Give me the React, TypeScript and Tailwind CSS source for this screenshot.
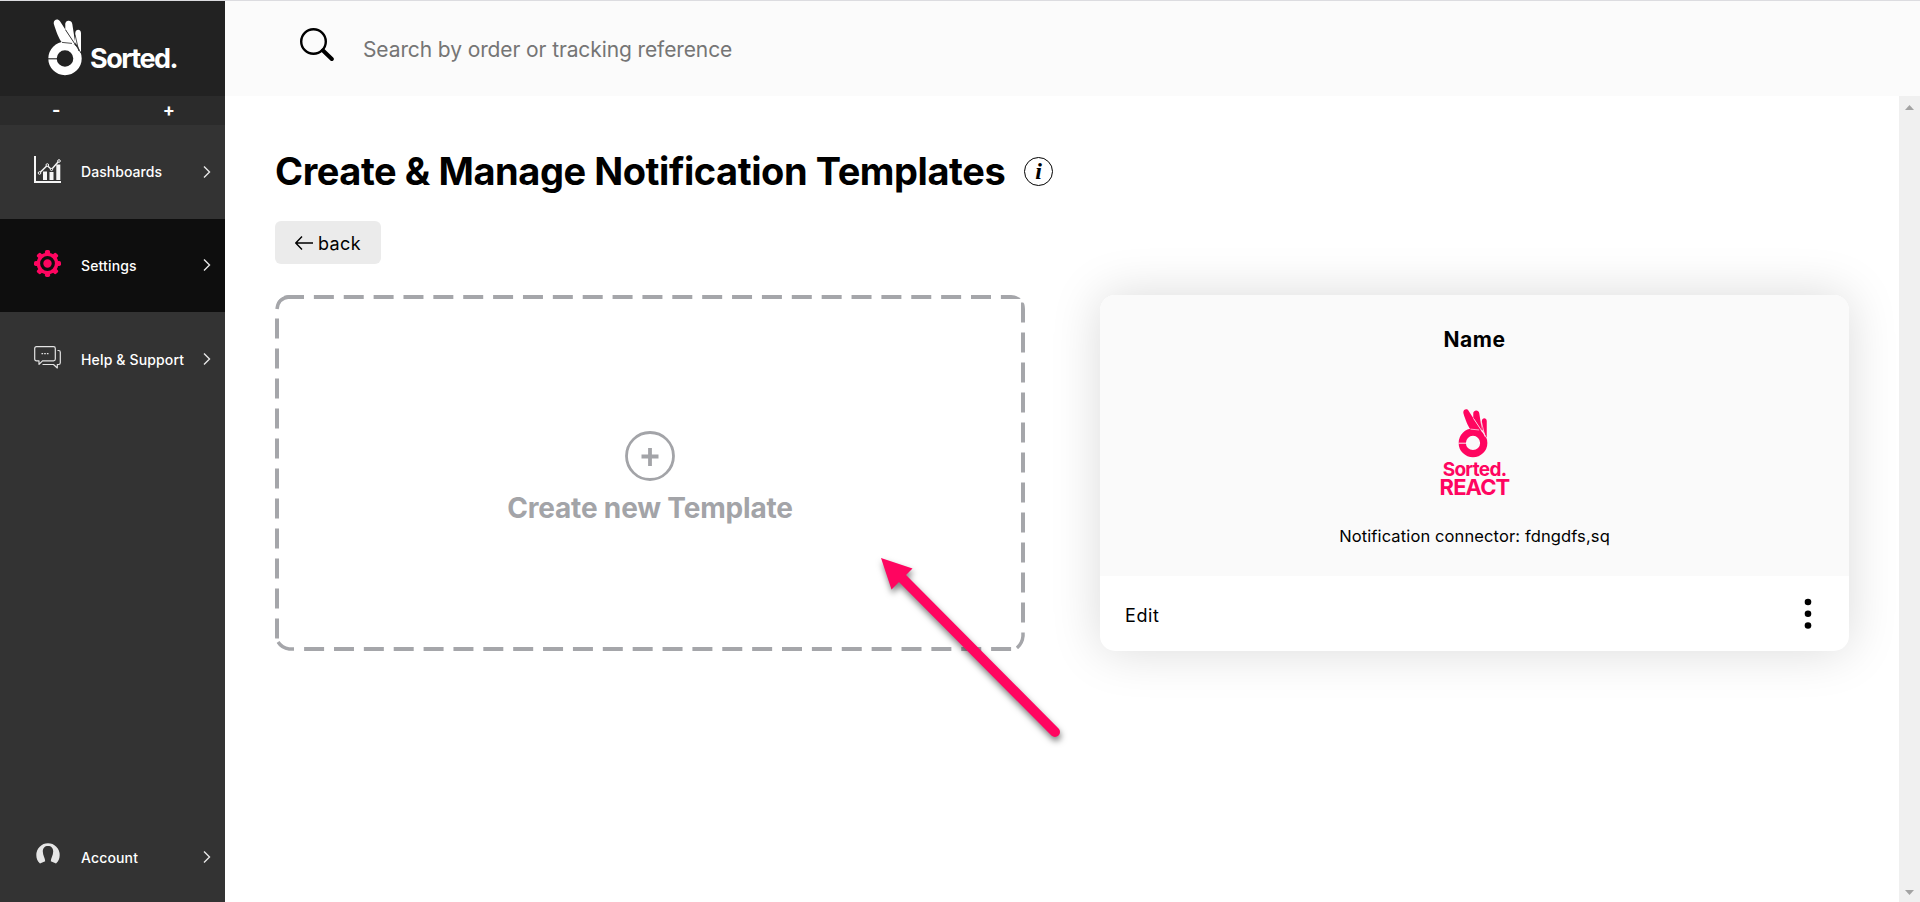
import React from "react";

const FONT = "font-['Inter','Liberation_Sans',sans-serif]";

function Hand({ className, gap }: { className: string; gap: string }) {
  return (
    <svg viewBox="0 0 34 57" className={className} fill="none">
      <path d="M6 5.500C4.500 1 9.500-1.500 12 2.200L27 25.500 14 23.500C11 20 8 12 6 5.500Z" fill="currentColor" />
      <path d="M17.300 6C16.600 1.200 23.600.2 24.300 5L27.400 25 26 24 17.300 10Z" fill="currentColor" />
      <path d="M27.300 14C27.500 9.800 32.800 9.800 33 14L33 34C31 29 29 26 26.800 23Z" fill="currentColor" />
      <circle cx="17" cy="39.500" r="12.500" stroke="currentColor" strokeWidth="8.400" />
      <path d="M14 23.400 24 24.400M17.600 11 33 34M27 15.500 30.800 32" stroke={gap} strokeWidth="0.800" />
      <path d="M0 39.800H9" stroke={gap} strokeWidth="1.100" />
    </svg>
  );
}

function Chevron() {
  return (
    <svg viewBox="0 0 8 14" className="h-[14px] w-2" fill="none" stroke="#e8e8e8" strokeWidth="1.400">
      <path d="M1 1.500 6.500 7 1 12.500" />
    </svg>
  );
}

function ChartIcon() {
  return (
    <svg viewBox="0 0 27 27" className="mb-[2px] size-[27px]" fill="none" stroke="#f5f5f5">
      <path d="M1 0V26H27" strokeWidth="2" />
      <path d="M11 24V15.500M17.500 24V16M24.300 24V8.500" strokeWidth="4" />
      <path d="M6 16.500 13.200 9.500 17.500 13.500 24.500 5.500" strokeWidth="1.500" />
      <circle cx="5.500" cy="17" r="1.300" fill="#333" />
      <circle cx="13.300" cy="9" r="1.300" fill="#333" />
      <circle cx="17.500" cy="13.500" r="1.100" fill="#333" />
      <circle cx="25" cy="5" r="1.300" fill="#333" />
    </svg>
  );
}

function GearIcon() {
  return (
    <svg viewBox="-13.500 -13.500 27 27" className="size-[27px]">
      <g fill="#ff0560">
        {[0, 45, 90, 135].map((a) => (
          <rect key={a} x="-2.600" y="-13.500" width="5.200" height="27" rx="1.800" transform={`rotate(${a})`} />
        ))}
        <circle r="10.800" />
      </g>
      <circle r="5.800" fill="#ff0560" stroke="#0e0e0e" strokeWidth="3.200" />
    </svg>
  );
}

function ChatIcon() {
  return (
    <svg viewBox="0 0 27 23" className="h-[23px] w-[27px]" fill="none" stroke="#e4e4e4" strokeWidth="1.200" strokeLinejoin="round">
      <path d="M2.500.7H19.500Q21.300.7 21.300 2.500V13Q21.300 14.800 19.500 14.800H8.500L5 18.300V14.800H2.500Q.7 14.800.7 13V2.500Q.7.7 2.500.7Z" />
      <path d="M23.500 4.500H24.500Q26.300 4.500 26.300 6.300V16.700Q26.300 18.500 24.500 18.500H23.300V22L19.500 18.500H8.500" />
      <path d="M7.500 7.600h1.600M10.200 7.600h1.600M12.900 7.600h1.600" strokeWidth="1.400" />
    </svg>
  );
}

function AccountIcon() {
  return (
    <svg viewBox="0 0 24 21" className="mb-[3px] h-[21px] w-6" fill="#e6e6e6">
      <path d="M4 20.500C1.500 18.500.3 15.500.3 12A11.700 11.700 0 0 1 23.700 12C23.700 15.500 22.500 18.500 20 20.500L14.800 18.200C14.800 15.500 17.200 12.500 17.200 8.500C17.200 5 15.200 3 12 3S6.800 5 6.800 8.500C6.800 12.500 9.200 15.500 9.200 18.200Z" />
    </svg>
  );
}

function NavItem({ icon, label, className = "", text }: { icon: React.ReactNode; label: string; className?: string; text: string }) {
  return (
    <div className={`flex h-[93.500px] w-full items-center pr-[14px] pl-[34px] ${className}`}>
      <span className="flex w-[27px] justify-center pb-[3px]">{icon}</span>
      <span className={`ml-5 flex-1 whitespace-nowrap text-[14px] font-medium text-white ${text}`}>{label}</span>
      <Chevron />
    </div>
  );
}

function Sidebar() {
  return (
    <aside className="flex w-[225px] shrink-0 flex-col bg-[#333]">
      <div className="flex h-[95px] items-start bg-[#222] pt-[18px] pl-12 text-white">
        <Hand className="h-[57px] w-[34px]" gap="#222" />
        <span className="mt-[22px] ml-2 text-[27px] leading-[36px] font-bold tracking-[-1.500px]">Sorted.</span>
      </div>
      <div className="flex h-[29px] bg-[#2b2b2b] text-center text-[18px] leading-[28px] font-bold text-white">
        <span className="w-1/2">-</span>
        <span className="w-1/2">+</span>
      </div>
      <NavItem icon={<ChartIcon />} label="Dashboards" text="tracking-[0.050px]" />
      <NavItem icon={<GearIcon />} label="Settings" text="tracking-[0.150px]" className="bg-[#0e0e0e]" />
      <NavItem icon={<ChatIcon />} label="Help & Support" text="tracking-[0.150px] pt-px" />
      <div className="flex-1" />
      <NavItem icon={<AccountIcon />} label="Account" text="tracking-[0.150px] pt-px" className="pt-[3px]" />
    </aside>
  );
}

function CreateCard() {
  return (
    <div className="relative flex h-[356px] w-[750px] flex-col items-center overflow-hidden rounded-[14px] pt-[136px] text-[#a3a4a8]">
      <svg viewBox="0 0 750 356" className="absolute inset-0 size-full" fill="none" stroke="#a5a6aa" strokeWidth="4">
        <path d="M9 2H746" strokeDasharray="20 9.870" />
        <path d="M748 7.500V328" strokeDasharray="20 10" />
        <path d="M29.100 354H737" strokeDasharray="20 9.870" />
        <path d="M2 23.500V344" strokeDasharray="20 10" />
        <path d="M2 14Q3 3 14 2M748 337.500V341Q747.500 348 742 353M19 354H14Q7 353 3 347" strokeWidth="3.500" />
      </svg>
      <svg viewBox="0 0 50 50" className="size-[50px] shrink-0" fill="none" stroke="currentColor">
        <circle cx="25" cy="25" r="23.500" strokeWidth="2.800" />
        <path d="M16.500 25.500h17M25 17v18" strokeWidth="3.800" />
      </svg>
      <span className="mt-[7px] text-[28px] leading-[40px] font-bold whitespace-nowrap tracking-[-0.180px]">Create new Template</span>
    </div>
  );
}

function TemplateCard() {
  return (
    <div className="flex h-[356px] w-[749px] flex-col overflow-hidden rounded-[15px] bg-white shadow-[0_0_50px_rgba(0,0,0,0.150)]">
      <div className="flex h-[281px] flex-col items-center bg-[#fafafa] pt-[30px]">
        <span className="text-[21px] leading-[30px] font-bold tracking-[0.500px]">Name</span>
        <div className="mt-[54px] flex flex-col items-center text-[#ff0560]">
          <Hand className="mr-[3px] h-[49px] w-[30px]" gap="#fafafa" />
          <span className="mt-[2px] text-[19px] leading-[19px] font-bold tracking-[-0.700px]">Sorted.</span>
          <span className="text-[22px] leading-[17px] font-bold tracking-[-0.900px]">REACT</span>
        </div>
        <span className="mt-[28px] text-[16.500px] leading-6 tracking-[0.120px]">Notification connector: fdngdfs,sq</span>
      </div>
      <div className="flex flex-1 items-center justify-between pr-[37px] pl-[25px]">
        <span className="pt-[3px] text-[18px] tracking-[0.600px]">Edit</span>
        <svg viewBox="0 0 8 32" className="h-8 w-2">
          <circle cx="4" cy="4" r="3.300" />
          <circle cx="4" cy="15.700" r="3.300" />
          <circle cx="4" cy="27.500" r="3.300" />
        </svg>
      </div>
    </div>
  );
}

function Arrow() {
  return (
    <svg viewBox="0 0 200 200" className="absolute top-[549px] left-[870px] size-[200px] overflow-visible drop-shadow-[1px_4px_3px_rgba(0,0,0,0.500)]">
      <path d="M30 26 185 182" stroke="#ff0560" strokeWidth="10" strokeLinecap="round" />
      <path d="M11 8 42.500 18.500 21.500 39.500Z" fill="#ff0560" />
    </svg>
  );
}

export default function App() {
  return (
    <div className={`relative flex h-[902px] w-full overflow-hidden border-t border-[#dcdce0] bg-white text-black ${FONT}`}>
      <Sidebar />
      <div className="flex min-w-0 flex-1 flex-col">
        <header className="flex h-[95px] shrink-0 bg-[#fbfbfb] pl-[75px]">
          <svg viewBox="0 0 34 34" className="mt-[27px] size-[34px]" fill="none" stroke="#000">
            <circle cx="13.500" cy="13.500" r="12.300" strokeWidth="2.400" />
            <path d="M23 22.500 31.800 31" strokeWidth="4" strokeLinecap="round" />
          </svg>
          <span className="mt-[34px] ml-[29px] text-[21px] leading-[30px] whitespace-nowrap tracking-[-0.110px] text-[#757575]">Search by order or tracking reference</span>
        </header>
        <div className="flex min-h-0 flex-1">
          <main className="min-w-0 flex-1 pt-[50px] pl-[50px]">
            <div className="flex h-[50px] items-center">
              <h1 className="w-[730px] text-[38px] leading-[50px] font-bold whitespace-nowrap tracking-[-0.440px]">Create &amp; Manage Notification Templates</h1>
              <span className="ml-[19px] flex size-[29px] items-center justify-center rounded-full border-[1.500px] border-black font-['Liberation_Serif',serif] text-[24px] leading-none font-bold italic">i</span>
            </div>
            <button className="mt-[25px] flex h-[43px] w-[106px] items-center rounded-[6px] bg-[#ebebeb] pl-5">
              <svg viewBox="0 0 18 14" className="h-[14px] w-[18px]" fill="none" stroke="#000" strokeWidth="1.400">
                <path d="M18 7H1M7 .5.800 7 7 13.500" />
              </svg>
              <span className="ml-[5px] pt-px text-[18px] tracking-[0.350px]">back</span>
            </button>
            <div className="mt-[31px] flex gap-[75px]">
              <CreateCard />
              <TemplateCard />
            </div>
          </main>
          <div className="flex w-[21px] shrink-0 flex-col items-center justify-between bg-[#f0f0f0] pt-[9px] pb-[7px]">
            <svg viewBox="0 0 9 5" className="h-[5px] w-[9px]" fill="#a3a3a3">
              <path d="M0 5 4.500 0 9 5Z" />
            </svg>
            <svg viewBox="0 0 9 5" className="h-[5px] w-[9px]" fill="#a3a3a3">
              <path d="M0 0 4.500 5 9 0Z" />
            </svg>
          </div>
        </div>
      </div>
      <Arrow />
    </div>
  );
}
